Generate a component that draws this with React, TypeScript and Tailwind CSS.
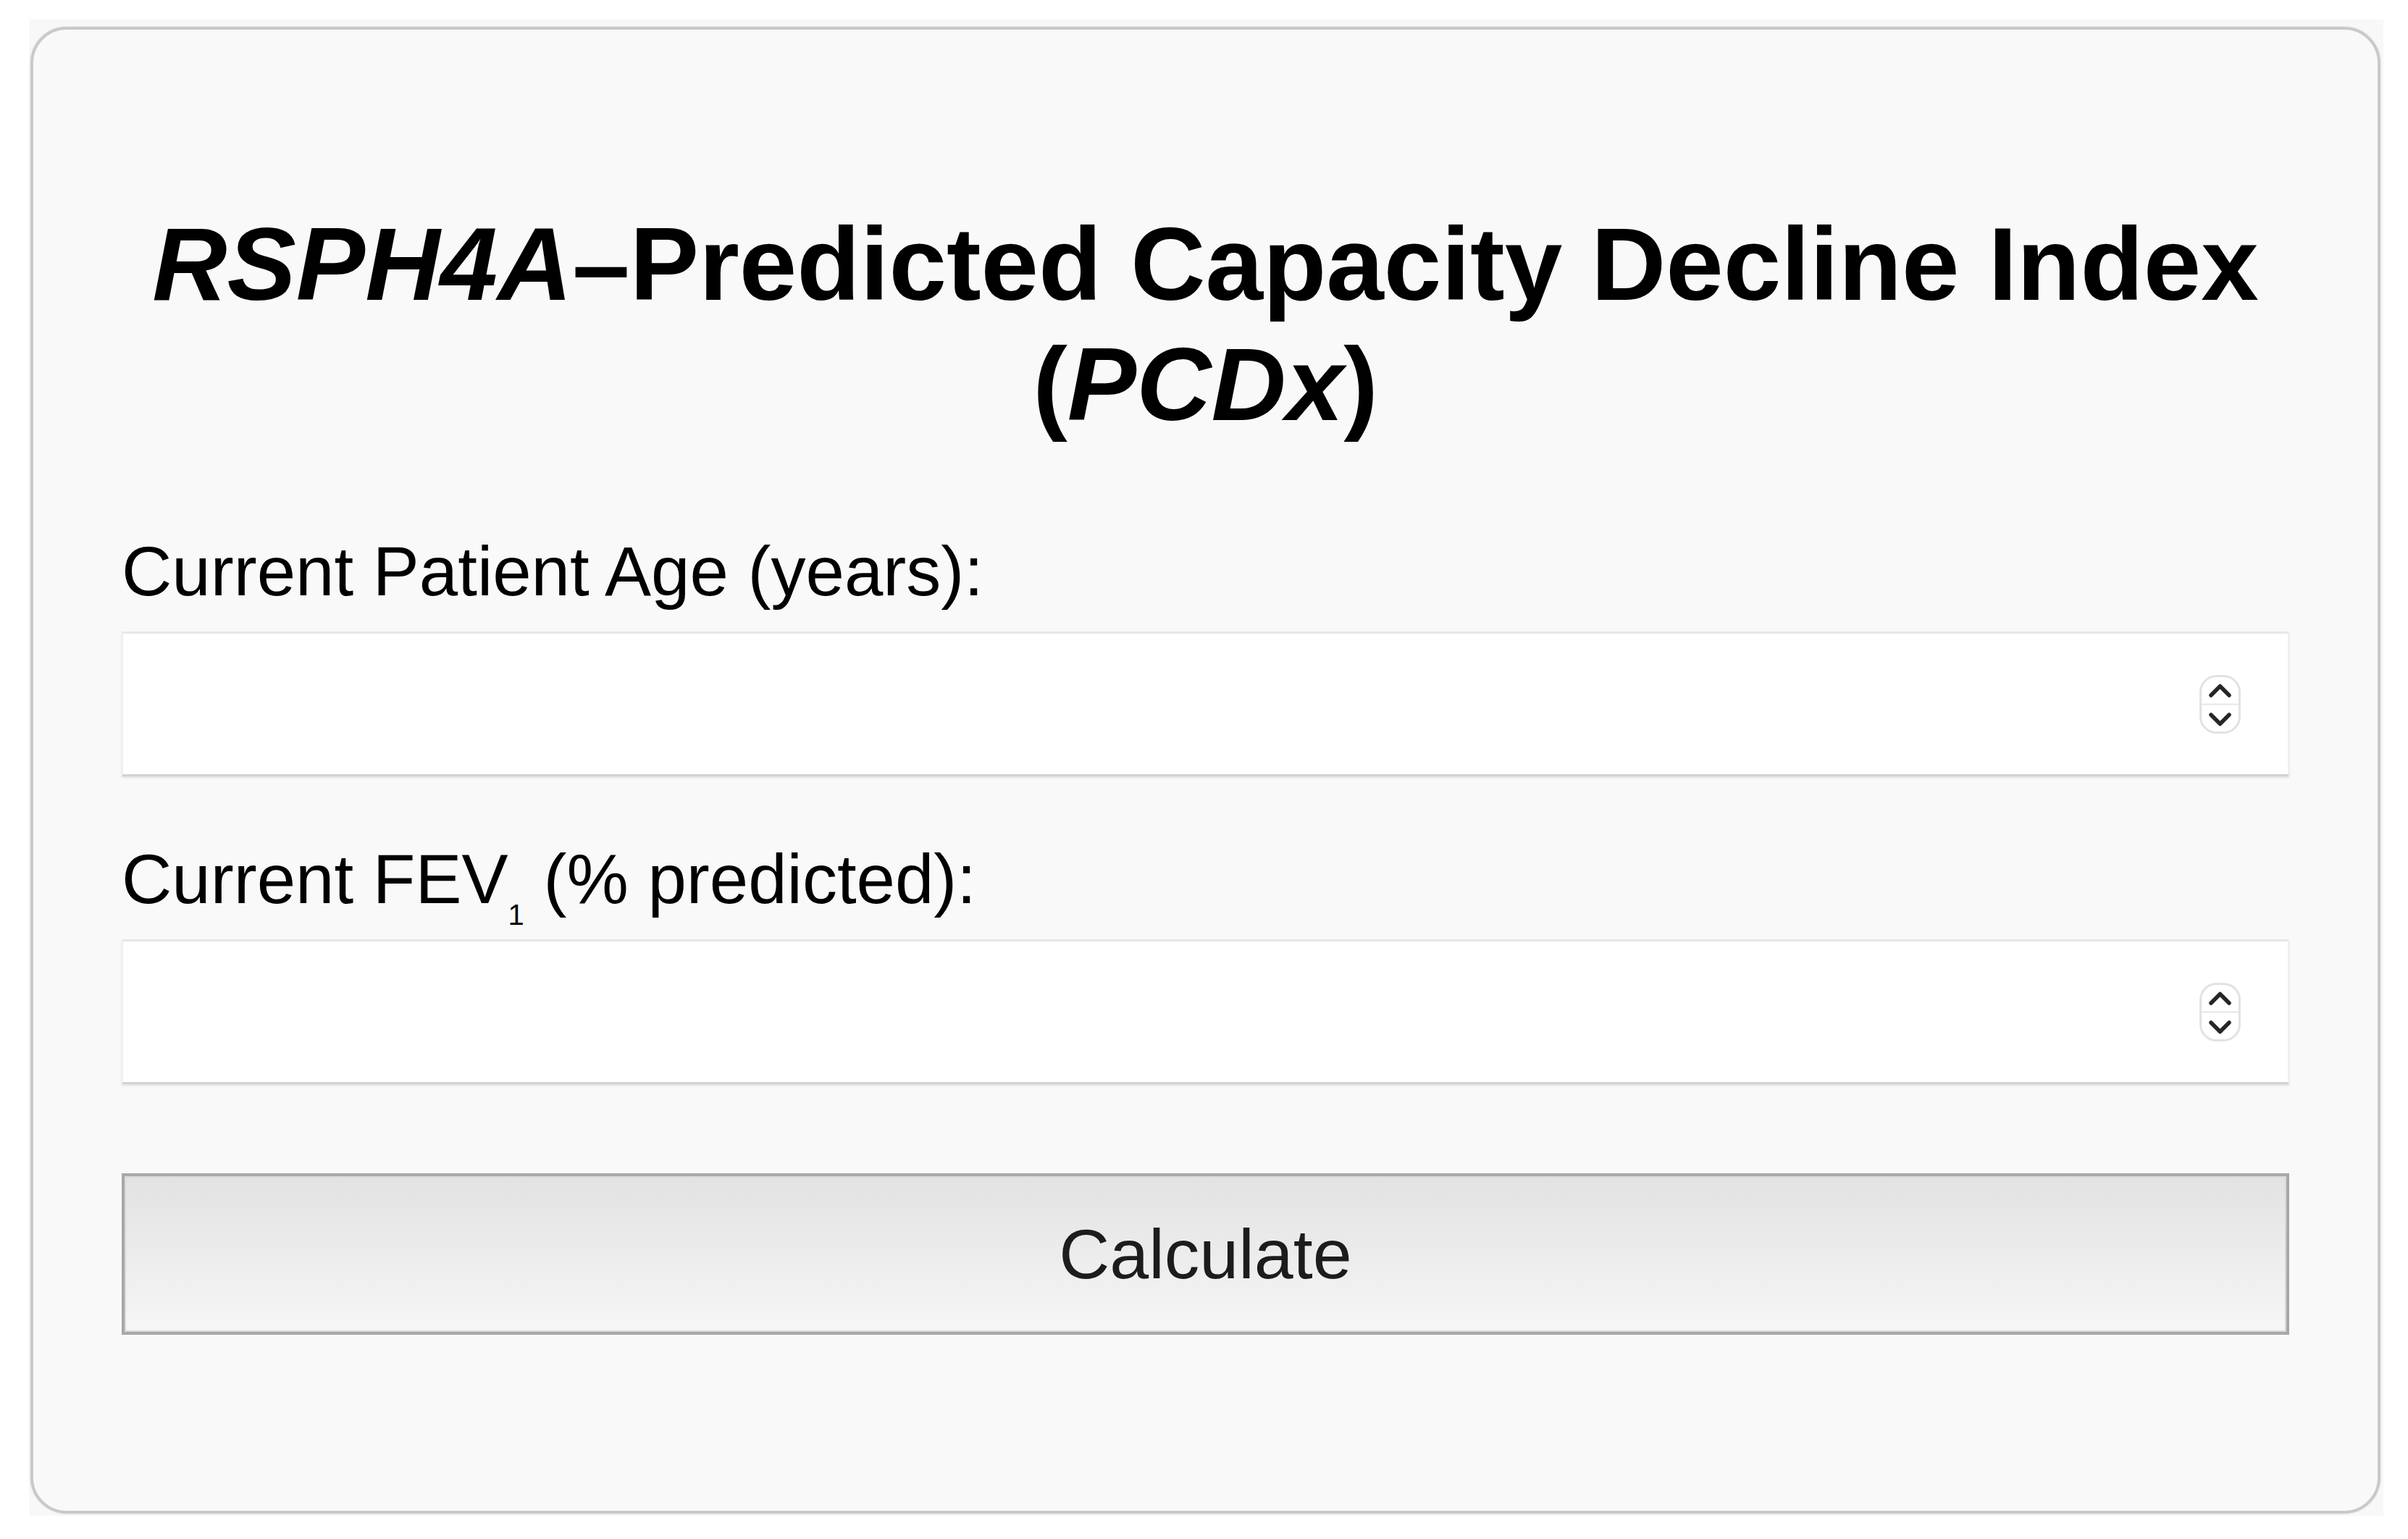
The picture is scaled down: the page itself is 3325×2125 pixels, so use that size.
import React from "react";

function Spinner() {
  return (
    <svg width="57" height="81" viewBox="0 0 57 81" className="shrink-0">
      <rect x="1.5" y="1.5" width="54" height="78" rx="22" fill="#ffffff" stroke="#e2e2e2" strokeWidth="3" />
      <line x1="3" y1="40.5" x2="54" y2="40.5" stroke="#e6e6e6" strokeWidth="2" />
      <path d="M16 28 L28.5 15.5 L41 28" fill="none" stroke="#262626" strokeWidth="5.5" strokeLinecap="round" strokeLinejoin="round" />
      <path d="M16 55 L28.5 67.5 L41 55" fill="none" stroke="#262626" strokeWidth="5.5" strokeLinecap="round" strokeLinejoin="round" />
    </svg>
  );
}

function NumberField({ label }: { label: string }) {
  return (
    <div className="flex h-[200px] items-center border-x-2 border-t-[3px] border-b-[3px] border-x-[#efefef] border-t-[#e7e7e7] border-b-[#d2d2d2] bg-white pr-[65px] shadow-[0_2px_3px_rgba(0,0,0,0.10)]">
      <input aria-label={label} type="text" className="h-full min-w-0 flex-1 bg-transparent px-6 text-[96px] outline-none" />
      <Spinner />
    </div>
  );
}

export default function App() {
  return (
    <div className="min-h-screen bg-white font-['Liberation_Sans',Arial,sans-serif] text-black">
      <div className="ml-[40px] mt-[27px] h-[2066px] w-[3251px] bg-[#f8f8f8] pl-[2px] pt-[10px]">
        <div className="h-[2053px] w-[3245px] rounded-[50px] border-4 border-[#c9c9c9] bg-[#f9f9f9] px-[122px] pt-[241px] shadow-[0_0_3px_rgba(0,0,0,0.12)]">
          <h1 className="text-center text-[143px] font-bold leading-[166px]">
            <i>RSPH4A</i>–Predicted Capacity Decline Index (<i>PCDx</i>)
          </h1>

          <label className="mt-[120px] block h-[110px] text-[96px] leading-[110px]">
            Current Patient Age (years):
          </label>
          <div className="mt-[28px]">
            <NumberField label="Current Patient Age (years)" />
          </div>

          <label className="mt-[87px] block h-[110px] text-[96px] leading-[110px]">
            Current FEV<span className="relative top-[30px] text-[40px] leading-none">1</span> (% predicted):
          </label>
          <div className="mt-[28px]">
            <NumberField label="Current FEV1 (% predicted)" />
          </div>

          <button
            type="button"
            className="mt-[123px] flex h-[223px] w-full items-center justify-center border-4 border-[#a8a8a8] bg-linear-to-b from-[#e2e2e2] to-[#f6f6f6] text-[97px] text-[#1c1c1c] shadow-[inset_0_0_0_2px_#d8d8d8]"
          >
            Calculate
          </button>
        </div>
      </div>
    </div>
  );
}
